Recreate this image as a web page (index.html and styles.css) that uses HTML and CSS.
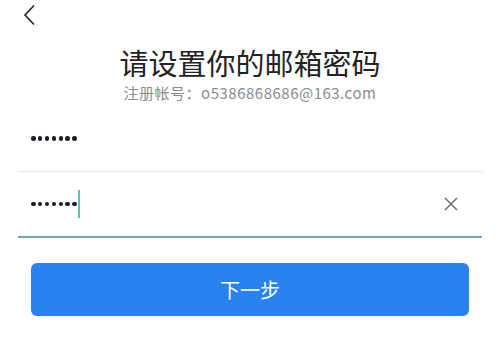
FILE: index.html
```html
<!DOCTYPE html>
<html lang="zh-CN">

<head>
    <meta charset="UTF-8">
    <meta name="viewport" content="width=device-width, initial-scale=1.0">
    <title>设置邮箱密码</title>
    <link rel="stylesheet" href="styles.css">
</head>

<body>
    <!-- Top bar with back arrow -->
    <div class="topbar">
        <svg class="back" width="14" height="22" viewBox="0 0 14 22">
            <polyline points="11,1.5 2,11 11,20.5" fill="none" stroke="#222" stroke-width="1.6" />
        </svg>
    </div>

    <h1 class="title">请设置你的邮箱密码</h1>
    <p class="account">注册帐号：o5386868686@163.com</p>

    <!-- Password fields -->
    <div class="fields">
        <div class="field">
            <div class="dots">
                <span></span><span></span><span></span><span></span><span></span><span></span><span></span>
            </div>
        </div>
        <div class="field active">
            <div class="dots">
                <span></span><span></span><span></span><span></span><span></span><span></span><span></span>
            </div>
            <div class="caret"></div>
            <svg class="clear" width="14" height="14" viewBox="0 0 14 14">
                <path d="M1 1 L13 13 M13 1 L1 13" stroke="#666" stroke-width="1.4" fill="none" />
            </svg>
        </div>
    </div>

    <button class="next">下一步</button>
</body>

</html>
```

FILE: styles.css
```css
body {
    font-family: "Noto Sans CJK SC", "Noto Sans", sans-serif;
    margin: 0;
    padding: 0;
    background-color: #fff;
    color: #222;
}

.topbar {
    height: 30px;
    padding-left: 23px;
    display: flex;
    align-items: center;
}

.back {
    display: block;
}

.title {
    margin: 14px 0 0;
    font-size: 29px;
    line-height: 36px;
    font-weight: normal;
    text-align: center;
    color: #222;
}

.account {
    margin: 3px 0 0;
    font-size: 15px;
    line-height: 20px;
    letter-spacing: 0.5px;
    text-align: center;
    color: #8c8c8c;
}

.fields {
    margin: 3px 18px 0;
}

.field {
    height: 65px;
    display: flex;
    align-items: center;
    padding-left: 13px;
    border-bottom: 1px solid #e8e8e8;
}

.field.active {
    height: 64px;
    border-bottom: 2px solid #6aa3d6;
}

.dots {
    display: flex;
    gap: 2.3px;
}

.dots span {
    width: 4.6px;
    height: 4.6px;
    border-radius: 50%;
    background-color: #1a1a24;
}

.caret {
    width: 2px;
    height: 28px;
    margin-left: 1.5px;
    background-color: #5cc4b4;
}

.clear {
    margin-left: auto;
    margin-right: 24px;
}

.next {
    display: block;
    width: 438px;
    height: 53px;
    margin: 25px auto 0;
    background-color: #2a82f0;
    color: #fff;
    border: none;
    border-radius: 6px;
    font-family: "Noto Sans CJK SC", sans-serif;
    font-size: 20px;
    cursor: pointer;
}
```
